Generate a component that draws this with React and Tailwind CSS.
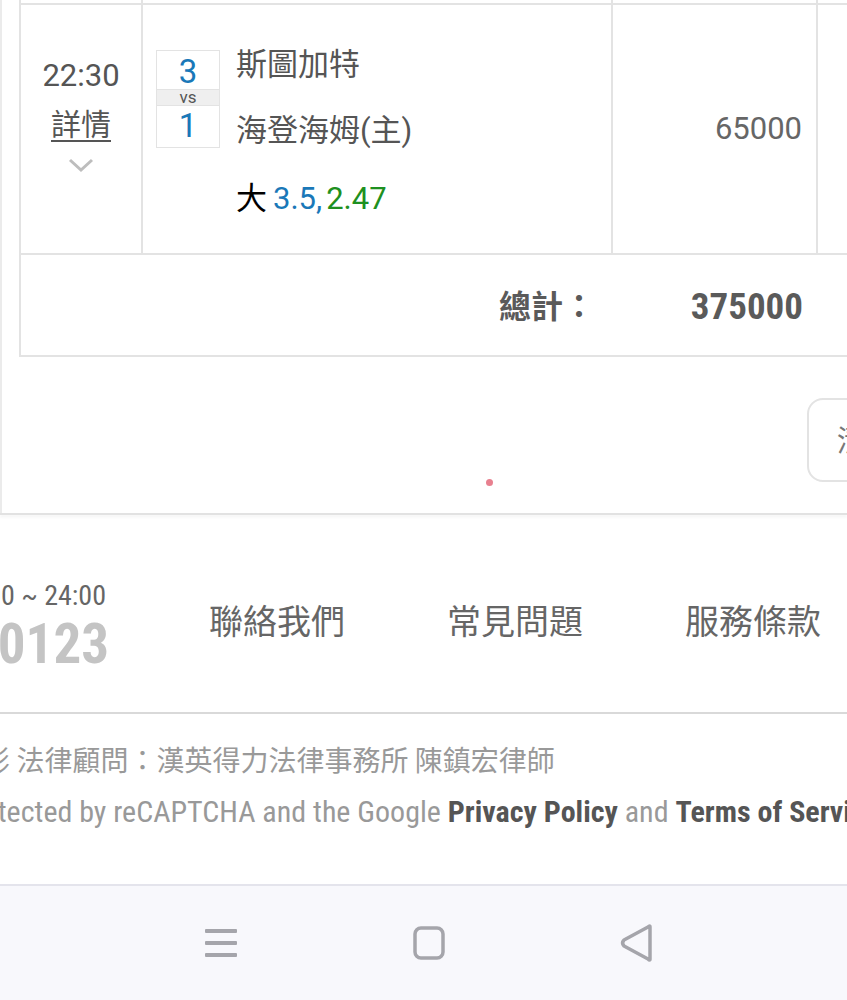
import React from "react";

const cond = { fontFamily: "'Roboto Condensed', Roboto, 'Noto Sans CJK TC', sans-serif", fontStretch: "condensed" };

export default function App() {
  return (
    <div
      className="relative w-[847px] h-[1000px] overflow-hidden bg-white flex flex-col"
      style={{ fontFamily: "Roboto, 'Noto Sans CJK TC', sans-serif" }}
    >
      {/* main card */}
      <div className="h-[513px] shrink-0 border-l-2 border-[#ebebeb] pl-[17px] flex flex-col relative">
        <div className="w-[1000px] border-l-2 border-b-2 border-[#e3e3e3] mt-[-10px] flex flex-col">
          {/* previous row stub */}
          <div className="grid grid-cols-[122px_470px_205px_1fr] h-[15px] border-b-2 border-[#e3e3e3]">
            <div className="border-r-2 border-[#e3e3e3]" />
            <div className="border-r-2 border-[#e3e3e3]" />
            <div className="border-r-2 border-[#e3e3e3]" />
            <div />
          </div>
          {/* match row */}
          <div className="grid grid-cols-[122px_470px_205px_1fr] h-[250px] border-b-2 border-[#e3e3e3]">
            <div className="border-r-2 border-[#e3e3e3] flex flex-col items-center pt-[52px] text-[#555]">
              <div className="text-[31px] leading-[38px]">22:30</div>
              <div className="text-[30px] leading-[38px] mt-[11px] underline underline-offset-[5px] decoration-2">詳情</div>
              <svg width="28" height="18" viewBox="0 0 28 18" className="mt-[12px]">
                <path d="M3 4 L14 14 L25 4" fill="none" stroke="#bdbdbd" strokeWidth="3" />
              </svg>
            </div>
            <div className="border-r-2 border-[#e3e3e3] flex pl-[13px] pt-[45px]">
              <div className="w-[64px] h-[98px] border border-[#e3e3e3] flex flex-col items-center text-[#1a78b8] shrink-0">
                <div className="h-[38px] pt-[4px] text-[33px] leading-[34px]">3</div>
                <div className="h-[17px] w-full bg-[#efefef] border-y border-[#e3e3e3] text-[17px] leading-[14px] text-[#555] text-center">vs</div>
                <div className="text-[33px] leading-[40px]">1</div>
              </div>
              <div className="ml-[16px] flex flex-col text-[31px] text-[#555]">
                <div className="leading-[40px] mt-[-5px]">斯圖加特</div>
                <div className="leading-[40px] mt-[26px]">海登海姆(主)</div>
                <div className="leading-[40px] mt-[28px] text-black">
                  大<span className="text-[#1a78b8] ml-[6px]">3.5,</span>
                  <span className="text-[#1e9020] ml-[4px]">2.47</span>
                </div>
              </div>
            </div>
            <div className="border-r-2 border-[#e3e3e3] flex items-center justify-end pr-[14px] text-[31px] text-[#666]">
              65000
            </div>
            <div />
          </div>
          {/* total row */}
          <div className="grid grid-cols-[592px_205px_1fr] h-[100px] items-center font-bold text-[#5a5a5a] pt-[4px]" style={cond}>
            <div className="text-right pr-[18px] text-[32px]">總計：</div>
            <div className="text-right pr-[15px] text-[37px]">375000</div>
            <div />
          </div>
        </div>
        {/* button */}
        <div className="mt-[41px] ml-[788px] w-[120px] h-[84px] rounded-[16px] border-2 border-[#e3e3e3] flex items-center pl-[28px] text-[30px] text-[#777] shrink-0">
          清除
        </div>
        <div className="absolute left-[484px] top-[479px] w-[7px] h-[7px] rounded-full bg-[#e8808f]" />
      </div>

      {/* divider */}
      <div className="h-[2px] bg-[#e2e2e2] shadow-[0_2px_3px_rgba(0,0,0,0.06)] shrink-0" />

      {/* footer links */}
      <div className="h-[199px] shrink-0 flex items-center border-b-2 border-[#d9d9d9] pt-[26px]">
        <div className="w-[250px] ml-[-141px] flex flex-col items-end shrink-0" style={cond}>
          <div className="text-[28px] leading-[30px] text-[#666] mr-[3px]">09:00 ~ 24:00</div>
          <div className="text-[55px] leading-[58px] font-bold text-[#c4c4c4] mt-[4px]">0123</div>
        </div>
        <div className="flex ml-[100px] gap-[102px] text-[34px] text-[#666] pb-[8px]" style={cond}>
          <span>聯絡我們</span>
          <span>常見問題</span>
          <span>服務條款</span>
        </div>
      </div>

      {/* legal */}
      <div className="h-[170px] shrink-0 flex flex-col pt-[30px] whitespace-nowrap" style={cond}>
        <div className="text-[28px] leading-[36px] text-[#999] ml-[-18px]">影 法律顧問：漢英得力法律事務所 陳鎮宏律師</div>
        <div className="text-[30px] leading-[36px] text-[#999] mt-[14px] ml-[-41px]">
          protected by reCAPTCHA and the Google <b className="text-[#555]">Privacy Policy</b> and <b className="text-[#555]">Terms of Service</b> apply.
        </div>
      </div>

      {/* nav bar */}
      <div className="flex-1 bg-[#f8f8fc] border-t-2 border-[#e4e4ec] flex items-center justify-center gap-[173px] pl-[10px]">
        <svg width="36" height="32" viewBox="0 0 36 32">
          <rect x="2" y="2" width="32" height="4" rx="1" fill="#a5a5ab" />
          <rect x="2" y="14" width="32" height="4" rx="1" fill="#a5a5ab" />
          <rect x="2" y="26" width="32" height="4" rx="1" fill="#a5a5ab" />
        </svg>
        <svg width="34" height="34" viewBox="0 0 34 34">
          <rect x="3" y="2" width="28" height="30" rx="6" fill="none" stroke="#a5a5ab" strokeWidth="3.5" />
        </svg>
        <svg width="36" height="38" viewBox="0 0 36 38">
          <path d="M31 3 L31 35 Q31 37 29 35 L5 22 Q2 19 5 16 L29 3 Q31 1 31 3 Z" fill="none" stroke="#a5a5ab" strokeWidth="3.5" strokeLinejoin="round" />
        </svg>
      </div>
    </div>
  );
}
